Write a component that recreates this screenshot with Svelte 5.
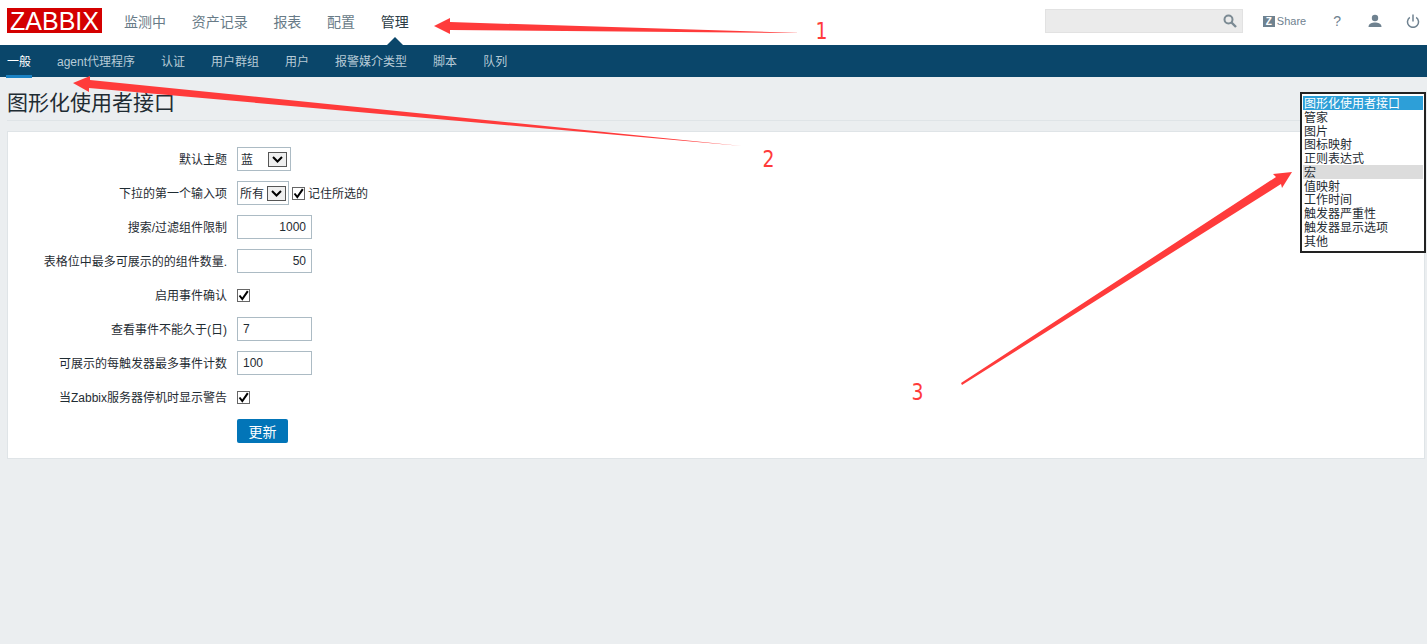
<script>
    const topNav = ['监测中', '资产记录', '报表', '配置', '管理'];
    const subNav = ['一般', 'agent代理程序', '认证', '用户群组', '用户', '报警媒介类型', '脚本', '队列'];
    const pages = ['图形化使用者接口', '管家', '图片', '图标映射', '正则表达式', '宏', '值映射', '工作时间', '触发器严重性', '触发器显示选项', '其他'];
</script>

{#snippet check()}
    <span class="check">
        <svg width="11" height="11" viewBox="0 0 11 11"><path d="M1.5 5.5 L4.3 9 L9.8 1.2" fill="none" stroke="#000" stroke-width="2"/></svg>
    </span>
{/snippet}

{#snippet dropdown(text, wide)}
    <div class="dropdown" class:wide>
        <span class="dd-text">{text}</span>
        <span class="dd-btn">
            <svg width="11" height="7" viewBox="0 0 11 7"><path d="M1 1 L5.5 5.5 L10 1" fill="none" stroke="#000" stroke-width="2"/></svg>
        </span>
    </div>
{/snippet}

<header class="topbar">
    <div class="logo">ZABBIX</div>
    <nav class="main-nav">
        {#each topNav as item, i}
            <span class="main-item" class:selected={i === 4}>{item}</span>
        {/each}
    </nav>
    <div class="tools">
        <div class="search">
            <svg width="14" height="14" viewBox="0 0 14 14"><circle cx="5.5" cy="5.5" r="4" fill="none" stroke="#7b8a93" stroke-width="2"/><path d="M8.5 8.5 L13 13" stroke="#7b8a93" stroke-width="2.4"/></svg>
        </div>
        <span class="share"><span class="z">Z</span>Share</span>
        <span class="help">?</span>
        <svg class="user" width="14" height="14" viewBox="0 0 14 14"><circle cx="7" cy="4" r="3.2" fill="#6f8290"/><path d="M0.5 13 C0.5 9.5 4 8.6 7 8.6 C10 8.6 13.5 9.5 13.5 13 Z" fill="#6f8290"/></svg>
        <svg class="power" width="14" height="14" viewBox="0 0 14 14"><path d="M3.8 3.4 A5.5 5.5 0 1 0 10.2 3.4" fill="none" stroke="#6f8290" stroke-width="1.5"/><path d="M7 0.5 V7.5" stroke="#6f8290" stroke-width="1.5"/></svg>
    </div>
</header>

<nav class="sub-nav">
    {#each subNav as item, i}
        <span class="sub-item" class:active={i === 0}>{item}</span>
    {/each}
</nav>

<main class="page">
    <h1 class="title">图形化使用者接口</h1>
    <form class="card">
        <div class="row">
            <span class="label">默认主题</span>
            {@render dropdown('蓝', true)}
        </div>
        <div class="row">
            <span class="label">下拉的第一个输入项</span>
            {@render dropdown('所有', false)}
            <span class="remember">{@render check()}<span class="remember-text">记住所选的</span></span>
        </div>
        <div class="row">
            <span class="label">搜索/过滤组件限制</span>
            <div class="input num">1000</div>
        </div>
        <div class="row">
            <span class="label">表格位中最多可展示的的组件数量.</span>
            <div class="input num">50</div>
        </div>
        <div class="row">
            <span class="label">启用事件确认</span>
            {@render check()}
        </div>
        <div class="row">
            <span class="label">查看事件不能久于(日)</span>
            <div class="input">7</div>
        </div>
        <div class="row">
            <span class="label">可展示的每触发器最多事件计数</span>
            <div class="input">100</div>
        </div>
        <div class="row">
            <span class="label">当Zabbix服务器停机时显示警告</span>
            {@render check()}
        </div>
        <div class="row">
            <span class="label"></span>
            <button type="button" class="update">更新</button>
        </div>
    </form>
</main>

<!-- dropdown opened over the page, annotations drawn on top of the screenshot -->
<ul class="popup">
    {#each pages as page, i}
        <li class:sel={i === 0} class:hover={i === 5}>{page}</li>
    {/each}
</ul>

<svg class="marks" width="1427" height="644" viewBox="0 0 1427 644">
    <polygon points="434,26 450,18 450,22 802,33 450,30 450,34" fill="#ff3b3b"/>
    <polygon points="73,83 90,76 90,80 742,146 89,88 89,92" fill="#ff3b3b"/>
    <polygon points="1292,172 1282,188 1281,184 962,385 961,383 1276,177 1273,174" fill="#ff3b3b"/>
    <text x="821.5" y="39" class="mark" textLength="12" lengthAdjust="spacingAndGlyphs">1</text>
    <text x="768.5" y="167" class="mark" textLength="12" lengthAdjust="spacingAndGlyphs">2</text>
    <text x="917.5" y="400" class="mark" textLength="12" lengthAdjust="spacingAndGlyphs">3</text>
</svg>

<style>
    :global(body) {
        margin: 0;
        background: #ebeef0;
        font-family: "Liberation Sans", "Noto Sans CJK SC", sans-serif;
        font-size: 12px;
        color: #1f2c33;
    }

    .topbar {
        height: 45px;
        background: #fff;
        display: flex;
        align-items: center;
        padding-left: 7px;
        box-sizing: border-box;
    }

    .logo {
        width: 95px;
        height: 25px;
        margin-top: -4px;
        background: #d40000;
        color: #fff;
        font-size: 25px;
        line-height: 26px;
        text-align: center;
    }

    .main-nav {
        display: flex;
        gap: 25.7px;
        margin-left: 22px;
        margin-top: -3px;
    }

    .main-item {
        font-size: 14px;
        color: #687b87;
    }

    .main-item.selected {
        color: #2b3b45;
        position: relative;
    }

    .main-item.selected::after {
        content: "";
        position: absolute;
        left: 50%;
        margin-left: -8px;
        bottom: -14px;
        border: 8px solid transparent;
        border-top: 0;
        border-bottom-color: #0a466a;
    }

    .tools {
        margin-left: auto;
        display: flex;
        align-items: center;
        margin-top: -3px;
        padding-right: 7px;
    }

    .search {
        width: 198px;
        height: 24px;
        box-sizing: border-box;
        background: #ebebeb;
        border: 1px solid #e2e2e2;
        display: flex;
        align-items: center;
        justify-content: flex-end;
        padding-right: 5px;
    }

    .share {
        display: flex;
        align-items: center;
        gap: 2px;
        margin-left: 20px;
        font-size: 11px;
        color: #6f8290;
    }

    .z {
        width: 12px;
        height: 11px;
        background: #6f8290;
        color: #fff;
        font-size: 10px;
        font-weight: bold;
        line-height: 11px;
        text-align: center;
    }

    .help {
        margin-left: 27px;
        font-size: 14px;
        color: #6f8290;
    }

    .user {
        margin-left: 27px;
    }

    .power {
        margin-left: 24px;
    }

    .sub-nav {
        height: 32px;
        background: #0a466a;
        display: flex;
        gap: 26px;
        padding-left: 7px;
    }

    .sub-item {
        height: 32px;
        box-sizing: border-box;
        line-height: 34px;
        color: #b7cbd7;
    }

    .sub-item.active {
        color: #fff;
        position: relative;
    }

    .sub-item.active::after {
        content: "";
        position: absolute;
        left: -1px;
        right: -1px;
        bottom: -1px;
        height: 3px;
        background: #1a82c4;
    }

    .page {
        padding: 0 2px 0 7px;
    }

    .title {
        margin: 0;
        height: 44px;
        line-height: 52px;
        box-sizing: border-box;
        font-size: 21px;
        font-weight: normal;
        color: #1f2c33;
        border-bottom: 1px solid #dfe4e7;
        width: 1418px;
    }

    .card {
        margin-top: 10px;
        height: 328px;
        box-sizing: border-box;
        background: #fff;
        border: 1px solid #dfe4e7;
        padding-top: 15px;
        display: flex;
        flex-direction: column;
        gap: 10px;
    }

    .row {
        display: flex;
        align-items: center;
        gap: 10px;
        height: 24px;
    }

    .label {
        width: 219px;
        margin-top: -1px;
        text-align: right;
        color: #1f2c33;
    }

    .input {
        width: 75px;
        height: 24px;
        box-sizing: border-box;
        border: 1px solid #acbbc4;
        padding: 0 5px;
        line-height: 23px;
        color: #1f2c33;
    }

    .input.num {
        text-align: right;
    }

    .dropdown {
        height: 24px;
        box-sizing: border-box;
        border: 1px solid #acbbc4;
        display: flex;
        align-items: center;
        justify-content: space-between;
        padding: 0 2px;
        width: 52px;
    }

    .dropdown.wide {
        width: 54px;
        padding: 0 3px;
    }

    .dd-text {
        margin-top: -1px;
    }

    .dd-btn {
        width: 19px;
        height: 15px;
        box-sizing: border-box;
        border: 1px solid #555;
        background: #efefef;
        display: flex;
        align-items: center;
        justify-content: center;
    }

    .check {
        width: 13px;
        height: 13px;
        box-sizing: border-box;
        border: 1px solid #666;
        display: inline-flex;
        align-items: center;
        justify-content: center;
        flex: none;
    }

    .remember {
        display: flex;
        align-items: center;
        gap: 3px;
        margin-left: -7px;
    }

    .remember-text {
        margin-top: -2px;
    }

    .update {
        width: 51px;
        height: 24px;
        padding: 0;
        border: 0;
        border-radius: 2px;
        background: #0275b8;
        color: #fff;
        font: inherit;
        font-size: 14px;
    }

    .popup {
        position: absolute;
        left: 1300px;
        top: 92px;
        width: 126px;
        height: 161px;
        box-sizing: border-box;
        margin: 0;
        padding: 2px 0 0;
        list-style: none;
        background: #fff;
        border: 2px solid #222;
        color: #1f2c33;
    }

    .popup li {
        padding-left: 1px;
        margin: 0 1px;
        height: 13.75px;
        line-height: 16px;
        white-space: nowrap;
    }

    .popup li.sel {
        background: #2d9fd8;
        color: #fff;
    }

    .popup li.hover {
        background: #dcdcdc;
    }

    .marks {
        position: absolute;
        left: 0;
        top: 0;
        pointer-events: none;
    }

    .mark {
        font-family: "DejaVu Sans", sans-serif;
        font-size: 23px;
        fill: #ff3b3b;
        text-anchor: middle;
    }
</style>
